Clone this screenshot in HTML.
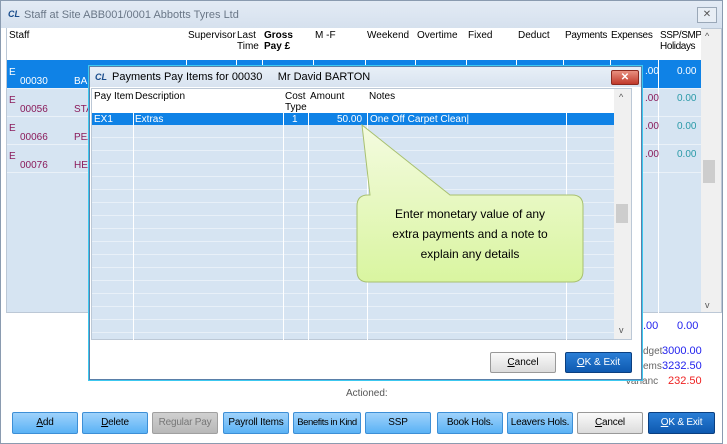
<!DOCTYPE html>
<html><head><style>
*{box-sizing:border-box;margin:0;padding:0}
body{width:727px;height:444px;position:relative;overflow:hidden;background:#fff;font-family:"Liberation Sans",sans-serif;font-size:10px;color:#000}
.a{position:absolute;white-space:nowrap}
.btn{position:absolute;top:412px;height:22px;width:66px;background:linear-gradient(#9fd2fb,#5ab2f5);border:1px solid #3d8fd6;text-align:center;line-height:20px;font-size:10px;border-radius:2px;white-space:nowrap;overflow:hidden;letter-spacing:-0.2px}
.hd{position:absolute;top:30px;font-size:10px;line-height:11px;white-space:nowrap}
.vl{position:absolute;width:1px;background:#fff}
.num{position:absolute;font-size:10px;white-space:nowrap}
</style></head><body>
<div class="a" style="left:0;top:0;width:723px;height:444px;border:1px solid #8a9bb0;background:#fff"></div>
<div class="a" style="left:1px;top:1px;width:721px;height:27px;background:linear-gradient(#e3ebf5,#d6e1ee)"></div>
<div class="a" style="left:8px;top:9px;font-size:9px;font-weight:bold;color:#1a4d8c;font-style:italic">CL</div>
<div class="a" style="left:24px;top:9px;color:#6a7787;font-size:11px">Staff at Site ABB001/0001 Abbotts Tyres Ltd</div>
<div class="a" style="left:697px;top:7px;width:20px;height:16px;border:1px solid #9aa8b8;background:#e8eef5;text-align:center;line-height:14px;color:#555">✕</div>
<div class="a" style="left:6px;top:28px;width:716px;height:285px;background:#d6e4f2;border:1px solid #bcc8d6"></div>
<div class="a" style="left:7px;top:28px;width:694px;height:32px;background:#fff"></div>
<div class="hd" style="left:9px">Staff</div>
<div class="hd" style="left:188px">Supervisor</div>
<div class="hd" style="left:237px">Last<br>Time</div>
<div class="hd" style="left:264px;font-weight:bold">Gross<br>Pay £</div>
<div class="hd" style="left:315px">M -F</div>
<div class="hd" style="left:367px">Weekend</div>
<div class="hd" style="left:417px">Overtime</div>
<div class="hd" style="left:468px">Fixed</div>
<div class="hd" style="left:518px">Deduct</div>
<div class="hd" style="left:565px;letter-spacing:-0.3px">Payments</div>
<div class="hd" style="left:611px;letter-spacing:-0.3px">Expenses</div>
<div class="hd" style="left:660px;letter-spacing:-0.4px">SSP/SMP<br>Holidays</div>
<div class="a" style="left:7px;top:60px;width:694px;height:28px;background:#0f82e6"></div>
<div class="a" style="left:7px;top:88px;width:694px;height:1px;background:#eaf1f8"></div>
<div class="a" style="left:7px;top:116px;width:694px;height:1px;background:#eaf1f8"></div>
<div class="a" style="left:7px;top:144px;width:694px;height:1px;background:#eaf1f8"></div>
<div class="a" style="left:7px;top:172px;width:694px;height:1px;background:#eaf1f8"></div>
<div class="vl" style="left:186px;top:28px;height:285px"></div>
<div class="vl" style="left:236px;top:28px;height:285px"></div>
<div class="vl" style="left:262px;top:28px;height:285px"></div>
<div class="vl" style="left:313px;top:28px;height:285px"></div>
<div class="vl" style="left:365px;top:28px;height:285px"></div>
<div class="vl" style="left:415px;top:28px;height:285px"></div>
<div class="vl" style="left:466px;top:28px;height:285px"></div>
<div class="vl" style="left:516px;top:28px;height:285px"></div>
<div class="vl" style="left:563px;top:28px;height:285px"></div>
<div class="vl" style="left:610px;top:28px;height:285px"></div>
<div class="vl" style="left:658px;top:28px;height:285px"></div>
<div class="num" style="left:9px;top:67px;color:#fff">E</div><div class="num" style="left:20px;top:76px;color:#fff">00030</div><div class="num" style="left:74px;top:76px;color:#fff">BAR</div>
<div class="num" style="left:9px;top:95px;color:#8a1a5a">E</div><div class="num" style="left:20px;top:104px;color:#8a1a5a">00056</div><div class="num" style="left:74px;top:104px;color:#8a1a5a">STA</div>
<div class="num" style="left:9px;top:123px;color:#8a1a5a">E</div><div class="num" style="left:20px;top:132px;color:#8a1a5a">00066</div><div class="num" style="left:74px;top:132px;color:#8a1a5a">PEA</div>
<div class="num" style="left:9px;top:151px;color:#8a1a5a">E</div><div class="num" style="left:20px;top:160px;color:#8a1a5a">00076</div><div class="num" style="left:74px;top:160px;color:#8a1a5a">HER</div>
<div class="num" style="left:645px;top:66px;color:#fff">.00</div><div class="num" style="left:677px;top:66px;color:#fff">0.00</div>
<div class="num" style="left:645px;top:93px;color:#8a1a5a">.00</div><div class="num" style="left:677px;top:93px;color:#2a9aa8">0.00</div>
<div class="num" style="left:645px;top:121px;color:#8a1a5a">.00</div><div class="num" style="left:677px;top:121px;color:#2a9aa8">0.00</div>
<div class="num" style="left:645px;top:149px;color:#8a1a5a">.00</div><div class="num" style="left:677px;top:149px;color:#2a9aa8">0.00</div>
<div class="a" style="left:701px;top:29px;width:20px;height:283px;background:#f0f0f0"></div>
<div class="a" style="left:703px;top:160px;width:12px;height:23px;background:#cdcdcd"></div>
<div class="a" style="left:705px;top:31px;font-size:9px;color:#555">^</div>
<div class="a" style="left:705px;top:300px;font-size:9px;color:#555">v</div>
<div class="num" style="left:643px;top:320px;color:#2222ee;font-size:11px">.00</div><div class="num" style="left:677px;top:320px;color:#2222ee;font-size:11px">0.00</div>
<div class="num" style="left:643px;top:346px;color:#666">dget</div><div class="num" style="left:662px;top:345px;color:#2222ee;font-size:11px">3000.00</div>
<div class="num" style="left:643px;top:361px;color:#666">ems</div><div class="num" style="left:662px;top:360px;color:#2222ee;font-size:11px">3232.50</div>
<div class="num" style="left:625px;top:376px;color:#666">Varianc</div><div class="num" style="left:668px;top:375px;color:#ee2222;font-size:11px">232.50</div>
<div class="a" style="left:346px;top:388px;color:#555">Actioned:</div>
<div class="btn" style="left:12px"><u>A</u>dd</div>
<div class="btn" style="left:82px"><u>D</u>elete</div>
<div class="btn" style="left:152px;background:linear-gradient(#d0d0d0,#b8b8b8);border-color:#a0a0a0;color:#777">Regular Pay</div>
<div class="btn" style="left:223px">Payroll Items</div>
<div class="btn" style="left:293px;width:68px;font-size:9.5px;letter-spacing:-0.4px">Benefits in Kind</div>
<div class="btn" style="left:365px">SSP</div>
<div class="btn" style="left:437px">Book Hols.</div>
<div class="btn" style="left:507px">Leavers Hols.</div>
<div class="btn" style="left:577px;background:linear-gradient(#fafafa,#dcdcdc);border-color:#999"><u>C</u>ancel</div>
<div class="btn" style="left:648px;width:67px;background:linear-gradient(#2a7ed6,#0e59b0);border-color:#0a3f80;color:#fff"><u>O</u>K &amp; Exit</div>
<div class="a" style="left:89px;top:66px;width:553px;height:314px;background:#fff;border:1px solid #5a7fa8;box-shadow:0 0 0 1px #3cc8f0"></div>
<div class="a" style="left:90px;top:67px;width:551px;height:20px;background:linear-gradient(#e8eff7,#d8e3f0)"></div>
<div class="a" style="left:95px;top:72px;font-size:9px;font-weight:bold;color:#1a4d8c;font-style:italic">CL</div>
<div class="a" style="left:112px;top:71px;font-size:11px">Payments Pay Items for 00030&nbsp;&nbsp;&nbsp;&nbsp;&nbsp;Mr David BARTON</div>
<div class="a" style="left:611px;top:70px;width:28px;height:15px;background:linear-gradient(#e89080,#c0392b);border:1px solid #8a2a20;color:#fff;text-align:center;line-height:13px;font-weight:bold;border-radius:2px">✕</div>
<div class="a" style="left:91px;top:88px;width:541px;height:252px;background:#d6e4f2;border:1px solid #bcc8d6"></div>
<div class="a" style="left:92px;top:125px;width:522px;height:214px;background:repeating-linear-gradient(#d6e4f2 0,#d6e4f2 12px,#e8f0f8 12px,#e8f0f8 13px)"></div>
<div class="a" style="left:92px;top:89px;width:522px;height:24px;background:#fff"></div>
<div class="hd" style="left:94px;top:91px">Pay Item</div>
<div class="hd" style="left:135px;top:91px">Description</div>
<div class="hd" style="left:285px;top:91px">Cost<br>Type</div>
<div class="hd" style="left:310px;top:91px">Amount</div>
<div class="hd" style="left:369px;top:91px">Notes</div>
<div class="a" style="left:92px;top:113px;width:522px;height:12px;background:#0f82e6"></div>
<div class="vl" style="left:133px;top:89px;height:251px"></div>
<div class="vl" style="left:283px;top:89px;height:251px"></div>
<div class="vl" style="left:308px;top:89px;height:251px"></div>
<div class="vl" style="left:367px;top:89px;height:251px"></div>
<div class="vl" style="left:566px;top:89px;height:251px"></div>
<div class="a" style="left:94px;top:114px;color:#fff">EX1</div>
<div class="a" style="left:135px;top:114px;color:#fff">Extras</div>
<div class="a" style="left:292px;top:114px;color:#fff">1</div>
<div class="a" style="left:337px;top:114px;color:#fff">50.00</div>
<div class="a" style="left:370px;top:114px;color:#fff">One Off Carpet Clean|</div>
<div class="a" style="left:614px;top:89px;width:17px;height:250px;background:#f0f0f0"></div>
<div class="a" style="left:616px;top:204px;width:12px;height:19px;background:#cdcdcd"></div>
<div class="a" style="left:619px;top:92px;font-size:9px;color:#555">^</div>
<div class="a" style="left:619px;top:325px;font-size:9px;color:#555">v</div>
<div class="a" style="left:490px;top:352px;width:66px;height:21px;background:linear-gradient(#fafafa,#dcdcdc);border:1px solid #999;text-align:center;line-height:19px;border-radius:2px"><u>C</u>ancel</div>
<div class="a" style="left:565px;top:352px;width:67px;height:21px;background:linear-gradient(#2a7ed6,#0e59b0);border:1px solid #0a3f80;color:#fff;text-align:center;line-height:19px;border-radius:2px"><u>O</u>K &amp; Exit</div>
<svg class="a" style="left:0;top:0" width="727" height="444">
<defs><linearGradient id="g" x1="0" y1="0" x2="0" y2="1"><stop offset="0" stop-color="#f4fbe0"/><stop offset="1" stop-color="#d9f5a0"/></linearGradient></defs>
<path d="M370 195 L362 125 L450 195 L572 195 Q583 195 583 206 L583 271 Q583 282 572 282 L368 282 Q357 282 357 271 L357 206 Q357 195 368 195 Z" fill="url(#g)" stroke="#a8c070" stroke-width="1"/>
<text x="470" y="218" text-anchor="middle" font-family="Liberation Sans" font-size="12">Enter monetary value of any</text>
<text x="470" y="238" text-anchor="middle" font-family="Liberation Sans" font-size="12">extra payments and a note to</text>
<text x="470" y="258" text-anchor="middle" font-family="Liberation Sans" font-size="12">explain any details</text>
</svg>
</body></html>
